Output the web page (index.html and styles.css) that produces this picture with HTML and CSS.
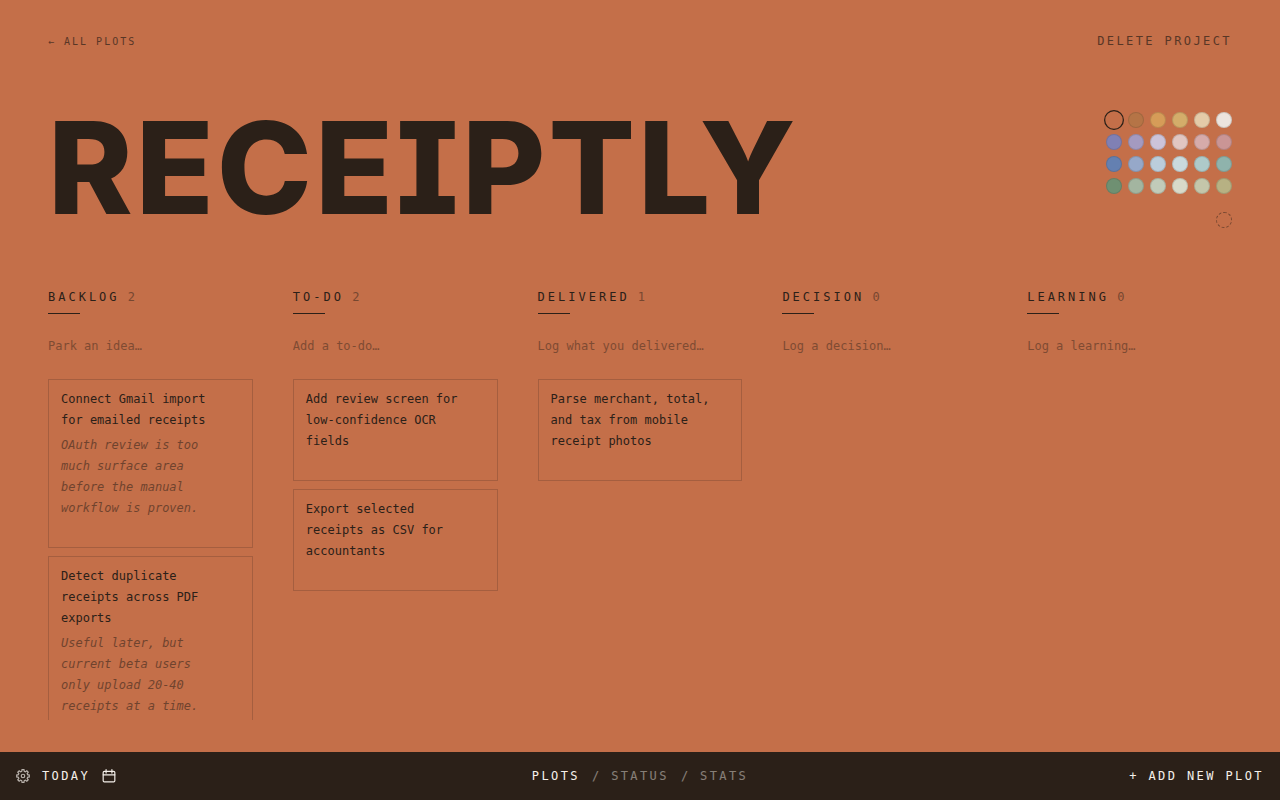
FILE: index.html
```html
<!DOCTYPE html>
<html lang="en">
<head>
    <meta charset="utf-8">
    <meta name="viewport" content="width=device-width, initial-scale=1">
    <title>Receiptly</title>
    <link rel="stylesheet" href="styles.css">
</head>
<body>
    <main class="project">
        <div class="topbar">
            <a class="back" href="#">← All plots</a>
            <button class="delete" type="button">Delete project</button>
        </div>

        <header class="hero">
            <h1 class="title">Receiptly</h1>
            <div class="palette">
                <div class="swatches">
                    <button class="swatch c1 selected" type="button" aria-label="Terracotta"></button>
                    <button class="swatch c2" type="button" aria-label="Clay"></button>
                    <button class="swatch c3" type="button" aria-label="Amber"></button>
                    <button class="swatch c4" type="button" aria-label="Ochre"></button>
                    <button class="swatch c5" type="button" aria-label="Sand"></button>
                    <button class="swatch c6" type="button" aria-label="Bone"></button>
                    <button class="swatch c7" type="button" aria-label="Iris"></button>
                    <button class="swatch c8" type="button" aria-label="Lavender"></button>
                    <button class="swatch c9" type="button" aria-label="Lilac"></button>
                    <button class="swatch c10" type="button" aria-label="Blush"></button>
                    <button class="swatch c11" type="button" aria-label="Rose"></button>
                    <button class="swatch c12" type="button" aria-label="Mauve"></button>
                    <button class="swatch c13" type="button" aria-label="Cobalt"></button>
                    <button class="swatch c14" type="button" aria-label="Steel"></button>
                    <button class="swatch c15" type="button" aria-label="Sky"></button>
                    <button class="swatch c16" type="button" aria-label="Ice"></button>
                    <button class="swatch c17" type="button" aria-label="Aqua"></button>
                    <button class="swatch c18" type="button" aria-label="Teal"></button>
                    <button class="swatch c19" type="button" aria-label="Forest"></button>
                    <button class="swatch c20" type="button" aria-label="Sage"></button>
                    <button class="swatch c21" type="button" aria-label="Mint"></button>
                    <button class="swatch c22" type="button" aria-label="Pearl"></button>
                    <button class="swatch c23" type="button" aria-label="Lichen"></button>
                    <button class="swatch c24" type="button" aria-label="Moss"></button>
                </div>
                <button class="swatch none" type="button" aria-label="No color"></button>
            </div>
        </header>

        <div class="board">
            <section class="column">
                <h2>Backlog <span class="count">2</span></h2>
                <input class="add" type="text" placeholder="Park an idea…" aria-label="Park an idea">
                <article class="card">
                    <p>Connect Gmail import for emailed receipts</p>
                    <p class="note">OAuth review is too much surface area before the manual workflow is proven.</p>
                </article>
                <article class="card">
                    <p>Detect duplicate receipts across PDF exports</p>
                    <p class="note">Useful later, but current beta users only upload 20-40 receipts at a time.</p>
                </article>
            </section>

            <section class="column">
                <h2>To-do <span class="count">2</span></h2>
                <input class="add" type="text" placeholder="Add a to-do…" aria-label="Add a to-do">
                <article class="card">
                    <p>Add review screen for low-confidence OCR fields</p>
                </article>
                <article class="card">
                    <p>Export selected receipts as CSV for accountants</p>
                </article>
            </section>

            <section class="column">
                <h2>Delivered <span class="count">1</span></h2>
                <input class="add" type="text" placeholder="Log what you delivered…" aria-label="Log what you delivered">
                <article class="card">
                    <p>Parse merchant, total, and tax from mobile receipt photos</p>
                </article>
            </section>

            <section class="column">
                <h2>Decision <span class="count">0</span></h2>
                <input class="add" type="text" placeholder="Log a decision…" aria-label="Log a decision">
            </section>

            <section class="column">
                <h2>Learning <span class="count">0</span></h2>
                <input class="add" type="text" placeholder="Log a learning…" aria-label="Log a learning">
            </section>
        </div>
    </main>

    <footer class="bottombar">
        <div class="left">
            <button class="icon gear" type="button" aria-label="Settings">
                <svg viewBox="0 0 24 24" width="14" height="14">
                    <circle cx="12" cy="12" r="3"/>
                    <path d="M10.1 1.2h3.8L14 4l2.2 1 2.2-2 2.6 2.6-2 2.2 1 2.2 2.8.1v3.8L20 14l-1 2.2 2 2.2-2.6 2.6-2.2-2-2.2 1-.1 2.8h-3.8L10 20l-2.2-1-2.2 2L3 18.4l2-2.2L4 14l-2.8-.1v-3.8L4 10l1-2.2-2-2.2L5.6 3l2.2 2L10 4z"/>
                </svg>
            </button>
            <a class="today" href="#">Today</a>
            <button class="icon" type="button" aria-label="Calendar">
                <svg viewBox="0 0 24 24" width="14" height="14">
                    <rect x="2" y="4" width="20" height="18" rx="2"/>
                    <path d="M7 1v6M17 1v6M2 10h20"/>
                </svg>
            </button>
        </div>
        <nav class="tabs">
            <a class="active" href="#">Plots</a>
            <span class="slash">/</span>
            <a href="#">Status</a>
            <span class="slash">/</span>
            <a href="#">Stats</a>
        </nav>
        <button class="new-plot" type="button">+ Add new plot</button>
    </footer>
</body>
</html>
```
FILE: styles.css
```css
* {
    margin: 0;
    padding: 0;
    box-sizing: border-box;
}

:root {
    --bg: #c46f49;
    --ink: #2b2018;
}

body {
    display: flex;
    flex-direction: column;
    height: 100vh;
    background: var(--bg);
    color: var(--ink);
    font-family: "DejaVu Sans Mono", monospace;
    font-size: 12px;
    line-height: 21px;
}

button {
    background: none;
    border: none;
    color: inherit;
    font: inherit;
    cursor: pointer;
}

a {
    color: inherit;
    text-decoration: none;
}

.project {
    flex: 1;
    min-height: 0;
    display: flex;
    flex-direction: column;
    padding: 32px 48px;
}

.topbar {
    display: flex;
    justify-content: space-between;
    align-items: center;
    height: 18px;
    margin-bottom: 62px;
}

.back,
.delete {
    text-transform: uppercase;
    letter-spacing: 0.2em;
    opacity: 0.7;
}

.back {
    font-size: 10px;
}

.hero {
    display: flex;
    justify-content: space-between;
    align-items: flex-start;
    margin-bottom: 56px;
}

.title {
    font-family: Inter, sans-serif;
    font-size: 128px;
    font-weight: 800;
    line-height: 112px;
    letter-spacing: 3px;
    text-transform: uppercase;
    font-feature-settings: "cv08"; /* serifed capital I */
}

.palette {
    display: flex;
    flex-direction: column;
    align-items: flex-end;
    gap: 18px;
}

.swatches {
    display: grid;
    grid-template-columns: repeat(6, 16px);
    gap: 6px;
}

.swatch {
    width: 16px;
    height: 16px;
    border: 1px solid rgba(43, 32, 24, 0.15);
    border-radius: 50%;
}

.swatch.selected {
    border-color: var(--ink);
    transform: scale(1.25);
}

.swatch.none {
    border: 1px dashed rgba(43, 32, 24, 0.5);
}

.c1 { background: #c46f49; }
.c2 { background: #b57446; }
.c3 { background: #d69c58; }
.c4 { background: #d4ad6a; }
.c5 { background: #e4cba8; }
.c6 { background: #ece4de; }
.c7 { background: #8080b4; }
.c8 { background: #a49ac0; }
.c9 { background: #ccc3d9; }
.c10 { background: #e1c6c1; }
.c11 { background: #d6abaa; }
.c12 { background: #ca9595; }
.c13 { background: #6480b1; }
.c14 { background: #96a8c9; }
.c15 { background: #bbcddb; }
.c16 { background: #cadadd; }
.c17 { background: #aecaca; }
.c18 { background: #8fb3ac; }
.c19 { background: #6f9072; }
.c20 { background: #a3b5a0; }
.c21 { background: #c1cbb9; }
.c22 { background: #d8dac9; }
.c23 { background: #c4c6aa; }
.c24 { background: #b7b183; }

.board {
    flex: 1;
    min-height: 0;
    display: grid;
    grid-template-columns: repeat(5, 1fr);
    gap: 40px;
    overflow: hidden;
}

.column h2 {
    margin-bottom: 20px;
    font-size: 12px;
    font-weight: 400;
    line-height: 26px;
    letter-spacing: 0.25em;
    text-transform: uppercase;
}

.column h2::after {
    content: "";
    display: block;
    width: 32px;
    height: 1px;
    margin-top: 3px;
    background: var(--ink);
}

.count {
    margin-left: -2px;
    opacity: 0.5;
}

.add {
    display: block;
    width: 100%;
    height: 23px;
    margin-bottom: 22px;
    background: none;
    border: none;
    outline: none;
    color: inherit;
    font: inherit;
}

.add::placeholder {
    color: var(--ink);
    opacity: 0.45;
}

.card {
    margin-bottom: 8px;
    padding: 9px 28px 28px 12px;
    border: 1px solid rgba(43, 32, 24, 0.2);
}

.note {
    margin-top: 4px;
    font-style: italic;
    opacity: 0.55;
}

.bottombar {
    display: grid;
    grid-template-columns: 1fr auto 1fr;
    align-items: center;
    height: 48px;
    padding: 0 16px;
    background: var(--ink);
    color: #f5f0ea;
    letter-spacing: 0.2em;
    text-transform: uppercase;
}

.left,
.tabs {
    display: flex;
    align-items: center;
    gap: 12px;
}

.bottombar button {
    text-transform: inherit;
    letter-spacing: inherit;
}

.icon {
    display: flex;
}

.icon svg {
    fill: none;
    stroke: currentColor;
    stroke-width: 2;
    stroke-linecap: round;
    stroke-linejoin: round;
}

.gear {
    opacity: 0.7;
}

.tabs a {
    opacity: 0.45;
}

.tabs .active {
    opacity: 1;
}

.slash {
    letter-spacing: 0;
    opacity: 0.45;
}

.new-plot {
    justify-self: end;
}
```
